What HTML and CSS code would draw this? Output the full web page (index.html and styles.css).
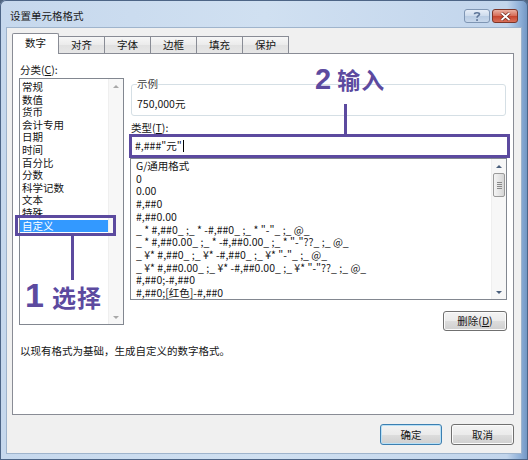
FILE: index.html
```html
<!DOCTYPE html>
<html lang="zh-CN">
<head>
<meta charset="utf-8">
<title>设置单元格格式</title>
<link rel="stylesheet" href="styles.css">
</head>
<body>
<div class="window">
  <div class="titlebar">
    <span class="title">设置单元格格式</span>
    <div class="caption-btns">
      <span class="cbtn help"><svg width="10" height="11" viewBox="0 0 10 11"><path d="M2.5 3.2 C2.5 1.2 7.5 1.2 7.5 3.2 C7.5 4.8 5 4.6 5 6.8" fill="none" stroke="#5d7598" stroke-width="1.6"/><rect x="4.2" y="8.2" width="1.7" height="1.7" fill="#5d7598"/></svg></span>
      <span class="cbtn close"><svg width="11" height="9" viewBox="0 0 11 9"><path d="M1.5 1 L9.5 8 M9.5 1 L1.5 8" stroke="#6b2418" stroke-width="3.2"/><path d="M1.5 1 L9.5 8 M9.5 1 L1.5 8" stroke="#ffffff" stroke-width="1.8"/></svg></span>
    </div>
  </div>
  <div class="client">
    <div class="tabs">
      <span class="tab active">数字</span>
      <span class="tab">对齐</span>
      <span class="tab">字体</span>
      <span class="tab">边框</span>
      <span class="tab">填充</span>
      <span class="tab">保护</span>
    </div>
    <div class="panel">
      <div class="cols">
        <div class="left">
          <div class="lbl">分类(<u>C</u>):</div>
          <div class="listbox cat">
            <ul class="items">
              <li>常规</li>
              <li>数值</li>
              <li>货币</li>
              <li>会计专用</li>
              <li>日期</li>
              <li>时间</li>
              <li>百分比</li>
              <li>分数</li>
              <li>科学记数</li>
              <li>文本</li>
              <li>特殊</li>
              <li class="sel">自定义</li>
            </ul>
            <div class="vscroll disabled">
              <span class="arrow"><i class="tri up"></i></span>
              <span class="arrow"><i class="tri down"></i></span>
            </div>
          </div>
        </div>
        <div class="right">
          <fieldset class="sample">
            <legend>示例</legend>
            <div class="sample-val">750,000元</div>
          </fieldset>
          <div class="lbl type-lbl">类型(<u>T</u>):</div>
          <div class="typebox">#,###"元"<span class="caret"></span></div>
          <div class="listbox fmt">
            <ul class="items">
              <li>G/通用格式</li>
              <li>0</li>
              <li>0.00</li>
              <li>#,##0</li>
              <li>#,##0.00</li>
              <li>_ * #,##0_ ;_ * -#,##0_ ;_ * "-"_ ;_ @_</li>
              <li>_ * #,##0.00_ ;_ * -#,##0.00_ ;_ * "-"??_ ;_ @_</li>
              <li>_ ¥* #,##0_ ;_ ¥* -#,##0_ ;_ ¥* "-"_ ;_ @_</li>
              <li>_ ¥* #,##0.00_ ;_ ¥* -#,##0.00_ ;_ ¥* "-"??_ ;_ @_</li>
              <li>#,##0;-#,##0</li>
              <li>#,##0;[红色]-#,##0</li>
            </ul>
            <div class="vscroll">
              <span class="arrow"><i class="tri up"></i></span>
              <span class="thumb"><i></i><i></i><i></i><i></i></span>
              <span class="spacer"></span>
              <span class="arrow"><i class="tri down"></i></span>
            </div>
          </div>
          <div class="delrow"><button class="btn del">删除(<u>D</u>)</button></div>
        </div>
      </div>
      <p class="desc">以现有格式为基础，生成自定义的数字格式。</p>
    </div>
    <div class="footer">
      <button class="btn ok">确定</button>
      <button class="btn cancel">取消</button>
    </div>
  </div>

  <div class="mark box1"></div>
  <div class="mark line1"></div>
  <div class="callout c1"><span class="num">1</span><span class="word">选择</span></div>
  <div class="mark line2"></div>
  <div class="callout c2"><span class="num">2</span><span class="word">输入</span></div>
</div>
</body>
</html>
```

FILE: styles.css
```css
* { box-sizing: border-box; margin: 0; padding: 0; }
html, body { width: 528px; height: 460px; overflow: hidden; }
body {
  background: #4f647f;
  font-family: "Noto Sans CJK SC", "Noto Sans", sans-serif;
  font-size: 10.5px;
  color: #141414;
}
u { text-decoration: underline; text-underline-offset: 1px; }

.window {
  position: relative;
  width: 528px;
  height: 460px;
  border-radius: 6px 6px 0 0;
  background: linear-gradient(to right, #c6d8ed 0, #d0e0f1 50%, #c2d5ec 96%, #8fb0d8 98.5%, #6f93c1 100%);
  box-shadow: inset 0 0 0 1px #4d6586;
  display: flex;
  flex-direction: column;
}

.titlebar {
  height: 28px;
  display: flex;
  align-items: flex-start;
  padding: 0 10px 0 10px;
}
.title { margin-top: 9px; line-height: 14px; color: #1b1b1b; }
.caption-btns { margin-left: auto; margin-top: 9px; display: flex; gap: 2px; }
.cbtn {
  width: 26px; height: 14px;
  display: flex; align-items: center; justify-content: center;
  border-radius: 3px;
}
.help {
  border: 1px solid #7f96b4;
  background: linear-gradient(#e7eef8, #cddbec 50%, #b9cce3 51%, #c8d8ec);
}
.close {
  border: 1px solid #7d3528;
  background: linear-gradient(#eab0a2, #d66a55 50%, #c6432d 51%, #d9705a);
}

.client {
  margin: 0 7px;
  height: 425px;
  background: #f0f0f0;
  box-shadow: 0 0 0 1px #9fb4cc;
  padding: 5px 7px 0 5px;
}

.tabs { display: flex; align-items: flex-end; height: 20px; }
.tab {
  width: 46px; height: 17px;
  display: flex; align-items: center; justify-content: center;
  border: 1px solid #898c95; border-left: 0; border-bottom: 0;
  background: linear-gradient(#f7f7f7, #ebebeb 50%, #e1e1e1 51%, #e6e6e6);
  line-height: 14px;
}
.tab.active {
  width: 47px; height: 21px;
  margin-bottom: -1px;
  border-left: 1px solid #898c95;
  background: #fff;
  position: relative; z-index: 2;
  border-radius: 2px 2px 0 0;
  padding-bottom: 2px;
}

.panel {
  height: 362px;
  background: #fff;
  border: 1px solid #898c95;
  padding: 9px 6px 0 6px;
}
.cols { display: flex; gap: 6px; align-items: flex-start; }
.left { width: 105px; }
.right { width: 377px; margin-top: 14px; }
.lbl { line-height: 14px; padding-left: 1px; margin-bottom: 1px; }

.listbox { border: 1px solid #828790; display: flex; background: #fff; }
.listbox .items { list-style: none; flex: 1; overflow: hidden; white-space: nowrap; }
.cat { height: 247px; }
.cat .items { padding-top: 2px; }
.cat li { line-height: 12.6px; padding-left: 2px; }
.cat li.sel { background: #3399ff; color: #fff; }

.vscroll {
  width: 15px;
  background: #f7f7f7;
  border-left: 1px solid #efefef;
  display: flex; flex-direction: column; justify-content: space-between;
}
.arrow { height: 14px; display: flex; align-items: center; justify-content: center; }
.tri { display: block; width: 0; height: 0; border-left: 3px solid transparent; border-right: 3px solid transparent; }
.tri.up { border-bottom: 3px solid #4a5f7c; }
.tri.down { border-top: 3px solid #4a5f7c; }
.disabled .tri.up { border-bottom-color: #a8a8a8; }
.disabled .tri.down { border-top-color: #a8a8a8; }

.fmt { height: 142px; }
.fmt .items { padding: 1px 0 0 5px; }
.fmt li { line-height: 12.7px; }
.fmt .vscroll { justify-content: flex-start; }
.fmt .spacer { flex: 1; }
.thumb {
  height: 24px; margin: 0 1px;
  border: 1px solid #9a9a9a; border-radius: 2px;
  background: linear-gradient(to right, #f4f4f4, #e6e6e6 50%, #d6d6d6);
  display: flex; flex-direction: column; align-items: center; justify-content: center; gap: 1px;
}
.thumb i { display: block; width: 5px; height: 1px; background: #8a8a8a; }

.sample {
  margin: 0 1px;
  border: 1px solid #d5dfe5;
  border-radius: 3px;
  padding: 6px 5px 4px 5px;
}
.sample legend { padding: 0; line-height: 14px; color: #3c3c3c; }
.sample-val { line-height: 14px; }
.type-lbl { margin-top: 5px; line-height: 13px; margin-bottom: 0; }

.typebox {
  height: 24px;
  margin: 0 -3px 0 -1px;
  border: 3px solid #5c4a9f;
  background: #fff;
  padding-left: 3px;
  line-height: 18px;
  display: flex; align-items: center;
  white-space: pre;
}
.caret { display: inline-block; width: 1px; height: 12px; background: #000; margin-left: 1px; }

.delrow { display: flex; justify-content: flex-end; margin-top: 11px; }
.btn {
  font: inherit; color: #151515;
  height: 20px;
  border: 1px solid #707070; border-radius: 3px;
  background: linear-gradient(#f3f3f3, #ebebeb 50%, #dddddd 51%, #cfcfcf);
  box-shadow: inset 0 0 0 1px #fbfbfb;
  display: flex; align-items: center; justify-content: center;
  line-height: 14px;
}
.del { width: 64px; }
.desc { margin-top: 14px; line-height: 12px; padding-left: 1px; }

.footer { display: flex; justify-content: flex-end; gap: 9px; margin-top: 9px; }
.footer .btn { height: 21px; }
.ok { width: 62px; border-color: #3c7fb1; box-shadow: inset 0 0 0 1px #b8e0f6; }
.cancel { width: 63px; }

/* annotation overlays */
.mark { position: absolute; }
.box1 { left: 15px; top: 215px; width: 101px; height: 21px; border: 3px solid #5c4a9f; }
.line1 { left: 71px; top: 236px; width: 3px; height: 44px; background: #5c4a9f; }
.line2 { left: 344px; top: 104px; width: 3px; height: 30px; background: #5c4a9f; }
.callout {
  position: absolute;
  color: #5c4a9f;
  font-weight: 700;
  display: flex; align-items: baseline;
}
.callout .num { font-family: "Liberation Sans", "DejaVu Sans", sans-serif; }
.callout .word { font-family: "Noto Sans CJK SC", sans-serif; }
.c1 { left: 25px; top: 276px; }
.c1 .num { font-size: 34px; margin-right: 8px; }
.c1 .word { font-size: 24px; letter-spacing: 1px; }
.c2 { left: 315px; top: 62px; }
.c2 .num { font-size: 29px; margin-right: 6px; }
.c2 .word { font-size: 23px; letter-spacing: 1px; }
```
